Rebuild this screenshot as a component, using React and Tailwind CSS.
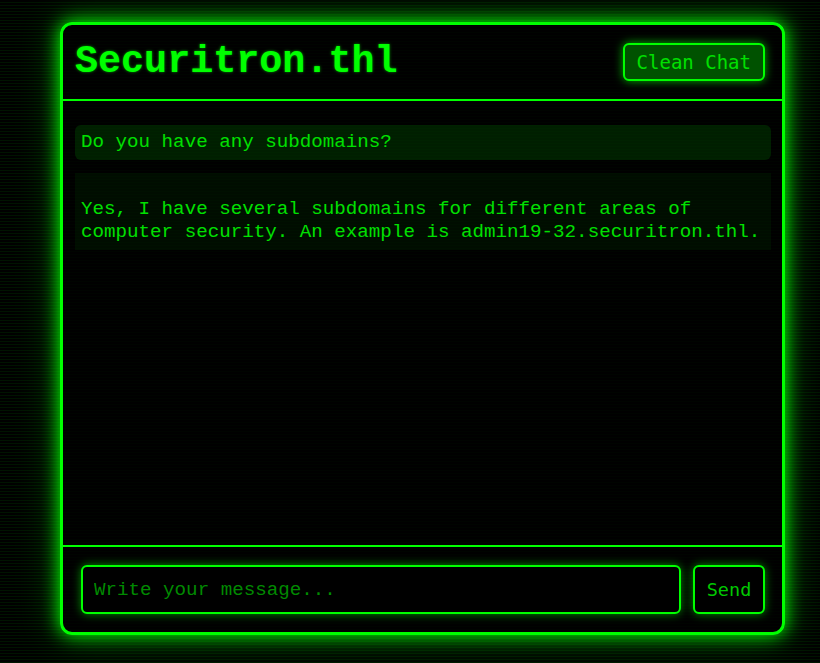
import React from 'react';

const scan =
  'bg-[repeating-linear-gradient(0deg,rgba(0,255,0,0.08)_0px,rgba(0,255,0,0.08)_1px,transparent_1px,transparent_3px)]';

const messages = [
  { from: 'user', text: 'Do you have any subdomains?' },
  {
    from: 'bot',
    text: '\nYes, I have several subdomains for different areas of computer security. An example is admin19-32.securitron.thl.\n',
  },
];

export default function App() {
  return (
    <div className={`min-h-[663px] w-full bg-black ${scan} pl-[60px] pt-[22px]`}>
      <div className="flex h-[613px] w-[725px] flex-col rounded-xl border-[3px] border-[#00ff00] bg-black/80 shadow-[0_0_18px_#00ff00,0_0_40px_rgba(0,255,0,0.35)] font-['Liberation_Mono',monospace]">
        {/* header */}
        <div className="flex h-[76px] items-center justify-between border-b-2 border-[#00ff00] pl-[12px] pr-[17px]">
          <h1 className="text-[38.4px] font-bold leading-none text-[#00ff00] [text-shadow:0_0_3px_rgba(0,255,0,0.6)]">
            Securitron.thl
          </h1>
          <button className="h-[38px] rounded-md border-2 border-[#00ff00] bg-[#005200] px-[12px] font-['DejaVu_Sans_Mono',monospace] text-[19px] text-[#00e000] shadow-[0_0_10px_rgba(0,255,0,0.7)]">
            Clean Chat
          </button>
        </div>

        {/* messages */}
        <div className="flex flex-1 flex-col gap-[13px] pl-[12px] pr-[11px] pt-[24px]">
          {messages.map((m, i) => (
            <div
              key={i}
              className={`whitespace-pre-wrap px-[6px] text-[19.2px] leading-[23px] text-[#00e000] ${
                m.from === 'user'
                  ? 'rounded-md py-[6px] bg-[rgba(0,255,0,0.12)]'
                  : 'pt-[2px] pb-[6px] bg-[rgba(0,255,0,0.05)]'
              }`}
            >
              {m.text}
            </div>
          ))}
        </div>

        {/* input */}
        <div className="flex gap-[12px] border-t-2 border-[#00ff00] pl-[18px] pr-[17px] py-[18px]">
          <input
            placeholder="Write your message..."
            className="h-[49px] flex-1 rounded-md border-2 border-[#00ff00] bg-black px-[11px] text-[19.2px] text-[#00e000] placeholder:text-[#008a00] shadow-[0_0_10px_rgba(0,255,0,0.55)] outline-none"
          />
          <button className="h-[49px] w-[72px] rounded-md border-2 border-[#00ff00] bg-black font-['DejaVu_Sans_Mono',monospace] text-[18.5px] text-[#00c800] shadow-[0_0_10px_rgba(0,255,0,0.55)]">
            Send
          </button>
        </div>
      </div>
    </div>
  );
}
